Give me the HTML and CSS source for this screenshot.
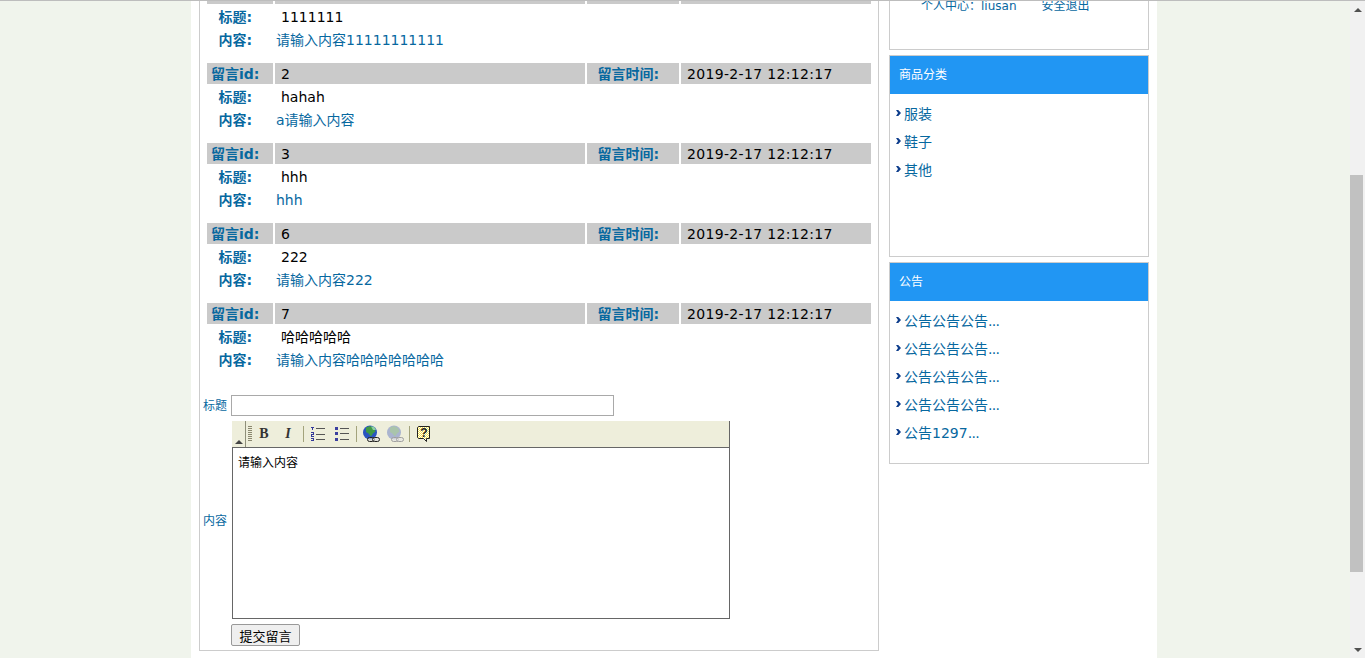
FILE: index.html
```html
<!DOCTYPE html>
<html lang="zh">
<head>
<meta charset="utf-8">
<title>留言</title>
<link rel="stylesheet" href="styles.css">
</head>
<body>
<div class="screen">
  <div class="stage">
    <div class="wrap">
      <main class="main">
        <section class="msg">
          <div class="head"><b class="hl">留言id:</b><span class="hv">1</span><b class="ht">留言时间:</b><span class="hv date">2019-2-17 12:12:17</span></div>
          <div class="line"><b class="lab">标题:</b><span class="title">1111111</span></div>
          <div class="line"><b class="lab">内容:</b><span class="body">请输入内容11111111111</span></div>
        </section>
        <section class="msg">
          <div class="head"><b class="hl">留言id:</b><span class="hv">2</span><b class="ht">留言时间:</b><span class="hv date">2019-2-17 12:12:17</span></div>
          <div class="line"><b class="lab">标题:</b><span class="title">hahah</span></div>
          <div class="line"><b class="lab">内容:</b><span class="body">a请输入内容</span></div>
        </section>
        <section class="msg">
          <div class="head"><b class="hl">留言id:</b><span class="hv">3</span><b class="ht">留言时间:</b><span class="hv date">2019-2-17 12:12:17</span></div>
          <div class="line"><b class="lab">标题:</b><span class="title">hhh</span></div>
          <div class="line"><b class="lab">内容:</b><span class="body">hhh</span></div>
        </section>
        <section class="msg">
          <div class="head"><b class="hl">留言id:</b><span class="hv">6</span><b class="ht">留言时间:</b><span class="hv date">2019-2-17 12:12:17</span></div>
          <div class="line"><b class="lab">标题:</b><span class="title">222</span></div>
          <div class="line"><b class="lab">内容:</b><span class="body">请输入内容222</span></div>
        </section>
        <section class="msg">
          <div class="head"><b class="hl">留言id:</b><span class="hv">7</span><b class="ht">留言时间:</b><span class="hv date">2019-2-17 12:12:17</span></div>
          <div class="line"><b class="lab">标题:</b><span class="title">哈哈哈哈哈</span></div>
          <div class="line"><b class="lab">内容:</b><span class="body">请输入内容哈哈哈哈哈哈哈</span></div>
        </section>

        <form class="form">
          <div class="frow">
            <label class="flabel">标题</label>
            <input class="finput" type="text">
          </div>
          <div class="frow">
            <label class="flabel">内容</label>
            <div class="editor">
              <div class="toolbar">
                <span class="collapse"></span>
                <span class="sep first"></span>
                <span class="grip"></span>
                <span class="tbtn bold">B</span>
                <span class="tbtn ital">I</span>
                <span class="sep"></span>
                <svg class="ico ol" width="16" height="16" viewBox="0 0 16 16">
                  <g fill="#33399a"><rect x="1" y="1" width="3" height="1"/><rect x="2" y="2" width="1" height="2"/><rect x="1" y="6" width="3" height="1"/><rect x="3" y="7" width="1" height="1"/><rect x="1" y="8" width="3" height="1"/><rect x="1" y="9" width="1" height="1"/><rect x="1" y="10" width="3" height="1"/><rect x="1" y="12" width="3" height="1"/><rect x="3" y="13" width="1" height="2"/><rect x="1" y="14" width="3" height="1"/></g>
                  <g fill="#555"><rect x="6" y="2" width="9" height="1"/><rect x="6" y="8" width="9" height="1"/><rect x="6" y="13" width="9" height="1"/></g>
                </svg>
                <svg class="ico ul" width="16" height="16" viewBox="0 0 16 16">
                  <g fill="#3b3f9f"><rect x="1" y="1" width="3" height="3"/><rect x="1" y="6" width="3" height="3"/><rect x="1" y="12" width="3" height="3"/></g>
                  <g fill="#555"><rect x="6" y="2" width="9" height="1"/><rect x="6" y="7" width="9" height="1"/><rect x="6" y="13" width="9" height="1"/></g>
                </svg>
                <span class="sep"></span>
                <svg class="ico" width="18" height="18" viewBox="0 0 18 18">
                  <circle cx="8" cy="7.5" r="7" fill="#2a55c0"/>
                  <path d="M4 2.500l4-1.500 4 2 1.500 3.500-2.500 2-2 3-2.500-3-2.500-1.500z" fill="#3f9a46"/>
                  <path d="M9 1.500h3l2 3.500-3 0z" fill="#8fd0a0"/>
                  <g fill="#d8d8d8" fill-opacity=".6" stroke="#222"><rect x="5.500" y="12.500" width="7" height="4" rx="2"/><rect x="10.500" y="12.500" width="7" height="4" rx="2"/></g>
                </svg>
                <svg class="ico off" width="18" height="18" viewBox="0 0 18 18">
                  <circle cx="8" cy="7.5" r="7" fill="#aab4cf"/>
                  <path d="M4 2.500l4-1.500 4 2 1.500 3.500-2.500 2-2 3-2.500-3-2.500-1.500z" fill="#a9c4ab"/>
                  <g fill="#e4e4e4" fill-opacity=".6" stroke="#a0a0a0"><rect x="5.500" y="12.500" width="7" height="4" rx="2"/><rect x="10.500" y="12.500" width="7" height="4" rx="2"/></g>
                </svg>
                <span class="sep"></span>
                <svg class="ico hlp" width="16" height="18" viewBox="0 0 16 18">
                  <defs>
                    <pattern id="dots" width="2" height="2" patternUnits="userSpaceOnUse">
                      <rect width="2" height="2" fill="#fff"/>
                      <rect width="1" height="1" fill="#f4e04a"/>
                      <rect x="1" y="1" width="1" height="1" fill="#f4e04a"/>
                    </pattern>
                  </defs>
                  <path d="M2.500 1.500h11v12h-3v3l-3-3h-5l-1-1v-10z" fill="url(#dots)" stroke="#222"/>
                  <text x="8" y="11.500" text-anchor="middle" class="qmark">?</text>
                </svg>
              </div>
              <div class="area">请输入内容</div>
            </div>
          </div>
          <button class="submit" type="button">提交留言</button>
        </form>
      </main>

      <aside class="side">
        <div class="panel user">
          <div class="userline"><span>个人中心：liusan</span><span>安全退出</span></div>
        </div>
        <div class="panel">
          <div class="phead">商品分类</div>
          <ul class="plist">
            <li>服装</li>
            <li>鞋子</li>
            <li>其他</li>
          </ul>
        </div>
        <div class="panel">
          <div class="phead">公告</div>
          <ul class="plist">
            <li><span>公告公告公告<span class="dots">...</span></span></li>
            <li><span>公告公告公告<span class="dots">...</span></span></li>
            <li><span>公告公告公告<span class="dots">...</span></span></li>
            <li><span>公告公告公告<span class="dots">...</span></span></li>
            <li><span>公告1297<span class="dots">...</span></span></li>
          </ul>
        </div>
      </aside>
    </div>
  </div>
  <div class="scrollbar">
    <span class="arrow up"></span>
    <span class="track"><span class="thumb"></span></span>
    <span class="arrow down"></span>
  </div>
</div>
</body>
</html>
```

FILE: styles.css
```css
* { box-sizing: border-box; }
html, body { margin: 0; height: 100%; overflow: hidden; }
body {
  font-family: "DejaVu Sans", "Noto Sans CJK SC", sans-serif;
  font-size: 14px;
  color: #000;
  background: #f0f4ec;
}
.screen { display: flex; height: 658px; width: 1365px; border-top: 1px solid #bdbdbd; }
.stage { flex: 1; overflow: hidden; }
.wrap {
  display: flex;
  align-items: flex-start;
  gap: 10px;
  width: 966px;
  height: 760px;
  margin: -41px 0 0 191px;
  padding-left: 8px;
  background: #fff;
}
.main {
  width: 680px;
  height: 691px;
  border: 1px solid #ccc;
  padding: 22px 7px 0;
  flex: none;
}
.msg { margin-bottom: 11px; }
.head {
  display: grid;
  grid-template-columns: 66px 310px 92px 190px;
  grid-template-rows: 21px;
  gap: 2px;
  height: 21px;
  line-height: 22px;
  margin-bottom: 2px;
}
.head > * { background: #cacaca; }
.hl, .ht, .lab { color: #07689f; font-weight: bold; }
.hl { padding-left: 4px; }
.ht { padding-left: 10.5px; }
.hv { padding-left: 6px; }
.date { letter-spacing: .33px; }
.line { display: flex; height: 23px; line-height: 21px; padding-top: 1px; }
.lab { width: 69px; padding-left: 11.5px; flex: none; }
.title { padding-left: 5px; }
.body { color: #07689f; }
.form { margin: 23px 0 0 -4px; }
.frow { display: flex; align-items: center; margin-bottom: 5px; }
.flabel { width: 28px; flex: none; font-size: 12px; padding-bottom: 2px; color: #07689f; }
.finput {
  width: 383px;
  height: 21px;
  border: 1px solid #a9a9a9;
  padding: 0;
  background: #fff;
}
.editor { width: 498px; height: 198px; margin-left: 1px; display: flex; flex-direction: column; }
.toolbar {
  height: 26px;
  flex: none;
  display: flex;
  align-items: center;
  background: #eeeedb;
  border-right: 1px solid #666;
}
.collapse {
  width: 0;
  height: 0;
  margin: 16px 1px 0 3px;
  border-left: 4px solid transparent;
  border-right: 4px solid transparent;
  border-bottom: 4px solid #444;
}
.sep { width: 1px; height: 16px; background: #a3a37c; margin: 0 5px; flex: none; }
.sep.first { height: 26px; margin: 0 2px 0 1px; background: #8f8f7a; }
.grip {
  width: 4px;
  height: 16px;
  flex: none;
  background: repeating-linear-gradient(to bottom, #8b8870 0 1px, #eeeedb 1px 2px);
}
.tbtn {
  width: 24px;
  flex: none;
  font-family: "Liberation Serif", serif;
  font-size: 14px;
  text-align: center;
  color: #333;
  font-weight: bold;
}
.ital { font-style: italic; margin-right: -2px; }
.ico { flex: none; display: block; }
.ol { margin-left: 1px; }
.ul { margin: 0 1px 0 8px; }
.off { margin-left: 6px; }
.hlp { margin-left: 1px; }
.qmark { font: bold 12px "Liberation Sans", sans-serif; fill: #222; }
.area {
  flex: 1;
  border: 1px solid #666;
  padding: 7px 5px;
  font-size: 12px;
  line-height: 16px;
  background: #fff;
}
.submit {
  display: block;
  width: 69px;
  height: 22px;
  margin: 1px 0 0 28px;
  padding: 0;
  font: 13px "DejaVu Sans", "Noto Sans CJK SC", sans-serif;
  color: #000;
  background: #efefef;
  border: 1px solid #999;
  border-radius: 2px;
}
.side { width: 260px; flex: none; display: flex; flex-direction: column; gap: 5px; }
.panel { border: 1px solid #ccc; height: 202px; background: #fff; }
.user { height: 90px; padding: 35px 0 0 31px; }
.userline { display: flex; gap: 25px; font-size: 12px; line-height: 20px; color: #07689f; }
.phead {
  height: 38px;
  line-height: 38px;
  padding-left: 9px;
  background: #2196f3;
  color: #fff;
  font-size: 12px;
}
.plist { list-style: none; margin: 0; padding: 5px 0 0; color: #07689f; }
.plist li {
  display: flex;
  align-items: center;
  gap: 3px;
  height: 28px;
  padding-left: 6px;
}
.plist li::before {
  content: "";
  width: 5px;
  height: 6px;
  flex: none;
  background: #0d3d8c;
  clip-path: polygon(0 0, 45% 0, 100% 50%, 45% 100%, 0 100%, 40% 50%);
}
.dots { letter-spacing: -.7px; }
.scrollbar {
  width: 15px;
  flex: none;
  display: flex;
  flex-direction: column;
  background: #f1f1f1;
}
.arrow { width: 15px; height: 17px; flex: none; display: flex; align-items: center; justify-content: center; }
.arrow::before {
  content: "";
  border-left: 4px solid transparent;
  border-right: 4px solid transparent;
}
.up::before { border-bottom: 4px solid #505050; }
.down::before { border-top: 4px solid #505050; }
.track { flex: 1; padding-top: 157px; }
.thumb { display: block; width: 13px; height: 397px; background: #c1c1c1; }
```
